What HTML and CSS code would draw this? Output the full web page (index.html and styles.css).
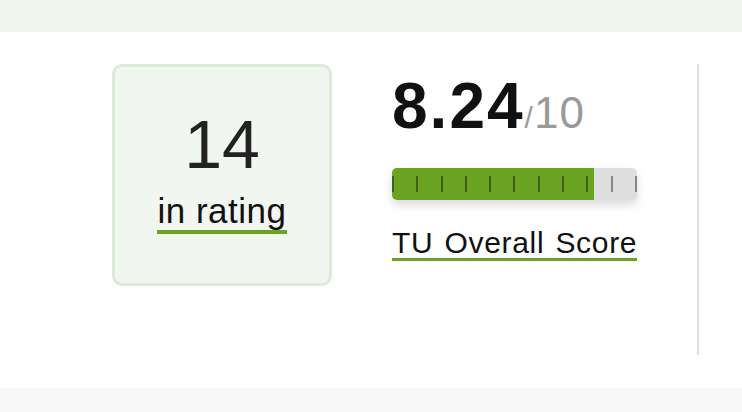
FILE: index.html
```html
<!DOCTYPE html>
<html lang="en">
<head>
    <meta charset="UTF-8">
    <meta name="viewport" content="width=device-width, initial-scale=1.0">
    <title>TU Overall Score</title>
    <link rel="stylesheet" href="styles.css">
</head>
<body>
    <div class="top-band"></div>

    <section class="score-section">
        <!-- Rating position -->
        <div class="rating-box">
            <div class="rating-num">14</div>
            <a href="#" class="rating-link">in rating</a>
        </div>

        <!-- Overall score -->
        <div class="score-col">
            <div class="score-value">8.24<span class="score-max"><span class="slash">/</span>10</span></div>
            <div class="score-bar">
                <div class="score-fill" style="width: 82.4%"></div>
                <div class="ticks">
                    <span></span><span></span><span></span><span></span><span></span><span></span>
                    <span></span><span></span><span></span><span></span><span></span>
                </div>
            </div>
            <a href="#" class="score-link">TU Overall Score</a>
        </div>

        <div class="divider"></div>
    </section>

    <div class="bottom-band"></div>
</body>
</html>
```

FILE: styles.css
```css
* {
    margin: 0;
    padding: 0;
    box-sizing: border-box;
}

body {
    font-family: 'Liberation Sans', Arial, sans-serif;
    background-color: #fff;
    color: #111;
}

.top-band {
    height: 32px;
    background-color: #f1f6ef;
}

.bottom-band {
    height: 40px;
    background-color: #f8f8f8;
}

.score-section {
    display: flex;
    align-items: flex-start;
    gap: 60px;
    padding: 32px 0 33px 112px;
}

/* Rating box */
.rating-box {
    width: 220px;
    height: 222px;
    display: flex;
    flex-direction: column;
    align-items: center;
    justify-content: center;
    padding-bottom: 6px;
    background-color: #f2f6f0;
    border: 3px solid #dcebd8;
    border-radius: 10px;
}

.rating-num {
    font-size: 68px;
    line-height: 68px;
    color: #222;
    margin-bottom: 15px;
}

.rating-link {
    font-size: 35px;
    line-height: 36px;
    letter-spacing: 0.5px;
    color: #111;
    text-decoration: none;
    border-bottom: 4px solid #6ba324;
    padding-bottom: 1px;
}

/* Score column */
.score-col {
    width: 245px;
    padding-top: 10px;
}

.score-value {
    font-size: 64px;
    line-height: 64px;
    font-weight: bold;
    letter-spacing: 2px;
    color: #111;
    white-space: nowrap;
}

.score-max {
    font-size: 44px;
    line-height: 1;
    font-weight: normal;
    letter-spacing: 1px;
    color: #999;
}

.slash {
    font-size: 30px;
}

.score-bar {
    position: relative;
    height: 32px;
    margin-top: 30px;
    background-color: #dedede;
    border-radius: 5px;
    overflow: hidden;
    box-shadow: 0 5px 10px rgba(0, 0, 0, 0.15);
}

.score-fill {
    height: 100%;
    background-color: #6ba423;
}

.ticks {
    position: absolute;
    top: 0;
    left: 0;
    width: 100%;
    height: 100%;
    display: flex;
    align-items: center;
    justify-content: space-between;
}

.ticks span {
    width: 2px;
    height: 16px;
    background-color: rgba(0, 0, 0, 0.4);
}

.score-link {
    display: inline-block;
    margin-top: 28px;
    font-size: 30px;
    line-height: 30px;
    letter-spacing: 0.7px;
    word-spacing: 2px;
    white-space: nowrap;
    color: #111;
    text-decoration: none;
    border-bottom: 3px solid #6ba324;
}

.divider {
    width: 2px;
    height: 291px;
    background-color: #e0e0e0;
}
```
